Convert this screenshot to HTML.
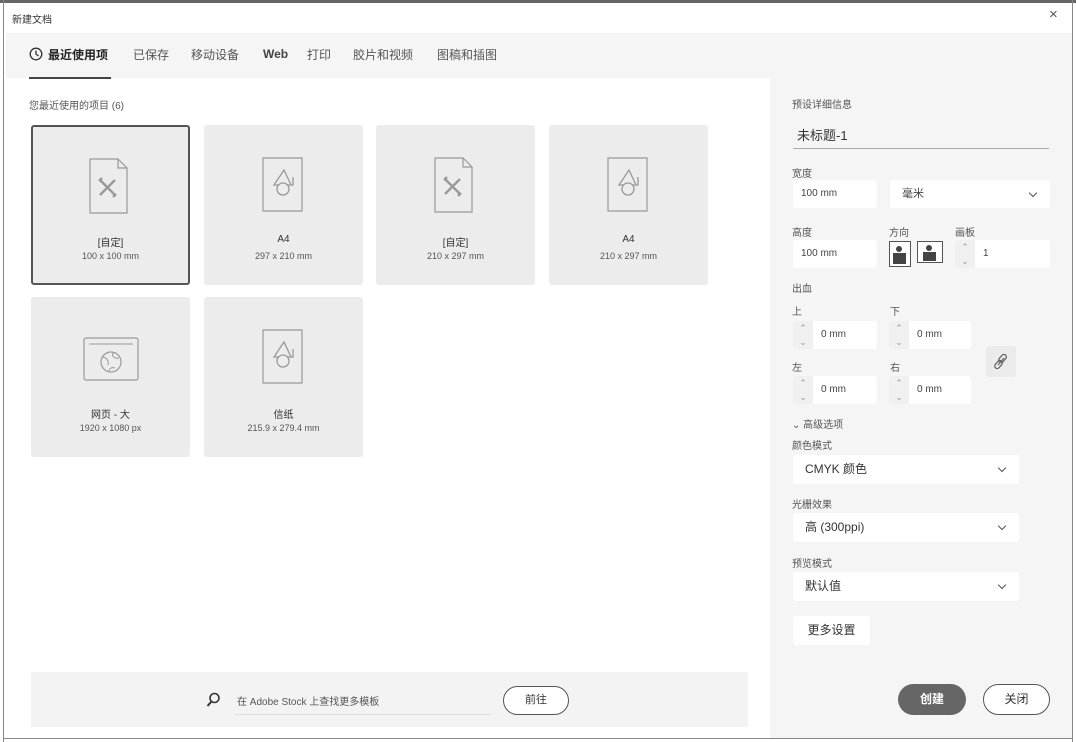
<!DOCTYPE html>
<html><head><meta charset="utf-8"><style>
*{margin:0;padding:0;box-sizing:border-box}
body{width:1076px;height:742px;background:#fff;font-family:"Liberation Sans","Noto Sans CJK SC",sans-serif;color:#333;position:relative;overflow:hidden}
.a{position:absolute}
.t{font-size:11px;color:#555}
.card{position:absolute;width:159px;height:160px;background:#ececec;border-radius:3px;text-align:center}
.card .n{position:absolute;top:109px;width:100%;font-size:10px;color:#333}
.card .s{position:absolute;top:126px;width:100%;font-size:9px;color:#555}
.card svg{position:absolute;left:56px;top:32px}
.inp{position:absolute;background:#fff;border-radius:3px;height:28px;font-size:10px;color:#444;line-height:28px;padding-left:8px}
.dd{position:absolute;background:#fff;border-radius:3px;height:29px;font-size:12px;color:#333;line-height:29px;padding-left:12px;left:793px;width:226px}
.dd:after,.chev:after{content:"";position:absolute;right:14px;top:10px;width:5px;height:5px;border-right:1.5px solid #555;border-bottom:1.5px solid #555;transform:rotate(45deg)}
.step{position:absolute;left:0;top:0;width:20px;height:28px;background:#f0f0f0;border-radius:3px 0 0 3px;font-size:9px;color:#999;text-align:center;line-height:14px}
.lbl{position:absolute;font-size:10px;color:#555}
</style></head><body>
<div class="a" style="left:0;top:0;width:1076px;height:3px;background:#666"></div>
<div class="a" style="left:3px;top:0;width:1px;height:742px;background:#888"></div>
<div class="a" style="left:1072px;top:0;width:1px;height:742px;background:#888"></div>
<div class="a" style="left:3px;top:738px;width:1070px;height:1px;background:#888"></div>
<div class="a" style="left:12px;top:11px;font-size:10px;color:#333">新建文档</div>
<div class="a" style="left:1049px;top:6px;font-size:15px;color:#555">×</div>
<div class="a" style="left:6px;top:33px;width:1066px;height:45px;background:#f5f5f5"></div>
<svg class="a" style="left:29px;top:47px" width="14" height="14" viewBox="0 0 14 14"><circle cx="7" cy="7" r="5.8" fill="none" stroke="#333" stroke-width="1.3"/><path d="M7 3.5V7l2.5 2" fill="none" stroke="#333" stroke-width="1.3"/></svg>
<div class="a" style="top:46px;left:48px;font-size:12px;color:#222;font-weight:bold">最近使用项</div>
<div class="a" style="top:46px;left:133px;font-size:12px;color:#555">已保存</div>
<div class="a" style="top:46px;left:191px;font-size:12px;color:#555">移动设备</div>
<div class="a" style="top:47px;left:263px;font-size:12px;color:#444;font-weight:bold">Web</div>
<div class="a" style="top:46px;left:307px;font-size:12px;color:#555">打印</div>
<div class="a" style="top:46px;left:353px;font-size:12px;color:#555">胶片和视频</div>
<div class="a" style="top:46px;left:437px;font-size:12px;color:#555">图稿和插图</div>
<div class="a" style="left:29px;top:77px;width:82px;height:2px;background:#444"></div>
<div class="a t" style="left:29px;top:97px;font-size:10px">您最近使用的项目 (6)</div>

<svg width="0" height="0" style="position:absolute"><defs>
<g id="pen"><path d="M1 1h28l9 9v45H1z" fill="none" stroke="#999" stroke-width="1.2"/><path d="M29 1v9h9" fill="none" stroke="#999" stroke-width="1.2"/><path d="M11 22l15 15M26 22L11 37M13 20l-3 3M24 39l3-3" stroke="#999" stroke-width="2.4" fill="none"/></g>
<g id="shp"><path d="M1 1h39v53H1z" fill="none" stroke="#999" stroke-width="1.2"/><path d="M22 13L12 28h17z M19 28h12v-8" fill="none" stroke="#999" stroke-width="1.3"/><circle cx="21" cy="32" r="6" fill="#ececec" stroke="#999" stroke-width="1.3"/></g>
</defs></svg>

<div class="card" style="left:31px;top:125px;border:2px solid #555"><svg style="left:56px;top:31px" width="40" height="56"><use href="#pen"/></svg><div class="n" style="top:107px">[自定]</div><div class="s" style="top:124px">100 x 100 mm</div></div>
<div class="card" style="left:204px;top:125px"><svg style="left:58px;top:32px" width="42" height="56"><use href="#shp"/></svg><div class="n">A4</div><div class="s">297 x 210 mm</div></div>
<div class="card" style="left:376px;top:125px"><svg style="left:58px;top:32px" width="40" height="56"><use href="#pen"/></svg><div class="n">[自定]</div><div class="s">210 x 297 mm</div></div>
<div class="card" style="left:549px;top:125px"><svg style="left:58px;top:32px" width="42" height="56"><use href="#shp"/></svg><div class="n">A4</div><div class="s">210 x 297 mm</div></div>
<div class="card" style="left:31px;top:297px"><svg style="left:52px;top:40px" width="56" height="44" viewBox="0 0 56 44"><rect x="1" y="1" width="54" height="42" rx="2" fill="none" stroke="#999" stroke-width="1.2"/><path d="M6 7h44" stroke="#999"/><circle cx="28" cy="25" r="10" fill="none" stroke="#999" stroke-width="1.2"/><path d="M20 20c4 1 6 4 5 8M30 16c-2 3 2 6 6 5M26 35c0-4 3-5 6-4" fill="none" stroke="#999"/></svg><div class="n">网页 - 大</div><div class="s">1920 x 1080 px</div></div>
<div class="card" style="left:204px;top:297px"><svg style="left:58px;top:32px" width="42" height="56"><use href="#shp"/></svg><div class="n">信纸</div><div class="s">215.9 x 279.4 mm</div></div>

<div class="a" style="left:31px;top:672px;width:717px;height:55px;background:#f3f3f3"></div>
<svg class="a" style="left:206px;top:692px" width="14" height="16"><circle cx="8.5" cy="6" r="4.5" fill="none" stroke="#333" stroke-width="1.6"/><path d="M5.5 9.5L1.5 14" stroke="#333" stroke-width="2"/></svg>
<div class="a" style="left:237px;top:693px;font-size:10px;color:#555">在 Adobe Stock 上查找更多模板</div>
<div class="a" style="left:235px;top:714px;width:256px;height:1px;background:#ddd"></div>
<div class="a" style="left:503px;top:686px;width:66px;height:29px;border:1.5px solid #555;border-radius:15px;background:#fff;text-align:center;line-height:26px;font-size:11px">前往</div>

<div class="a" style="left:770px;top:78px;width:302px;height:660px;background:#f5f5f5"></div>
<div class="lbl" style="left:792px;top:96px">预设详细信息</div>
<div class="a" style="left:797px;top:125px;font-size:13px;color:#333">未标题-1</div>
<div class="a" style="left:793px;top:148px;width:256px;height:1px;background:#aaa"></div>
<div class="lbl" style="left:792px;top:165px">宽度</div>
<div class="inp" style="left:793px;top:180px;width:84px">100 mm</div>
<div class="inp chev" style="left:890px;top:180px;width:160px;padding-left:12px;font-size:11px">毫米</div>
<div class="lbl" style="left:792px;top:224px">高度</div>
<div class="lbl" style="left:889px;top:224px">方向</div>
<div class="lbl" style="left:955px;top:224px">画板</div>
<div class="inp" style="left:793px;top:240px;width:84px">100 mm</div>
<div class="a" style="left:889px;top:241px;width:22px;height:26px;border:1.5px solid #555;background:#fff"><div class="a" style="left:6px;top:4px;width:6px;height:6px;background:#444;border-radius:50%"></div><div class="a" style="left:3px;top:11px;width:13px;height:11px;background:#444"></div></div>
<div class="a" style="left:917px;top:241px;width:26px;height:22px;border:1.5px solid #555;background:#fff"><div class="a" style="left:8px;top:3px;width:6px;height:6px;background:#444;border-radius:50%"></div><div class="a" style="left:5px;top:10px;width:13px;height:9px;background:#444"></div></div>
<div class="inp" style="left:955px;top:240px;width:95px;padding-left:28px"><div class="step">⌃<br>⌄</div>1</div>
<div class="lbl" style="left:792px;top:280px">出血</div>
<div class="lbl" style="left:792px;top:303px">上</div>
<div class="lbl" style="left:890px;top:303px">下</div>
<div class="inp" style="left:793px;top:321px;width:84px;padding-left:28px"><div class="step">⌃<br>⌄</div>0 mm</div>
<div class="inp" style="left:889px;top:321px;width:82px;padding-left:28px"><div class="step">⌃<br>⌄</div>0 mm</div>
<div class="lbl" style="left:792px;top:359px">左</div>
<div class="lbl" style="left:890px;top:359px">右</div>
<div class="inp" style="left:793px;top:376px;width:84px;padding-left:28px"><div class="step">⌃<br>⌄</div>0 mm</div>
<div class="inp" style="left:889px;top:376px;width:82px;padding-left:28px"><div class="step">⌃<br>⌄</div>0 mm</div>
<div class="a" style="left:986px;top:346px;width:30px;height:31px;background:#ebebeb;border-radius:3px"><svg width="30" height="31"><path d="M12 19l6-7" stroke="#666" stroke-width="1.3"/><rect x="14" y="8" width="5" height="9" rx="2.5" transform="rotate(40 16.5 12.5)" fill="none" stroke="#666" stroke-width="1.3"/><rect x="10" y="14" width="5" height="9" rx="2.5" transform="rotate(40 12.5 18.5)" fill="none" stroke="#666" stroke-width="1.3"/></svg></div>
<div class="lbl" style="left:792px;top:416px">⌄ 高级选项</div>
<div class="lbl" style="left:792px;top:437px">颜色模式</div>
<div class="dd" style="top:455px">CMYK 颜色</div>
<div class="lbl" style="left:792px;top:496px">光栅效果</div>
<div class="dd" style="top:513px">高 (300ppi)</div>
<div class="lbl" style="left:792px;top:555px">预览模式</div>
<div class="dd" style="top:572px">默认值</div>
<div class="a" style="left:793px;top:616px;width:77px;height:29px;background:#fff;border-radius:3px;font-size:12px;line-height:29px;text-align:center">更多设置</div>
<div class="a" style="left:898px;top:684px;width:68px;height:31px;background:#666;border-radius:16px;color:#fff;font-size:12px;font-weight:bold;text-align:center;line-height:31px">创建</div>
<div class="a" style="left:983px;top:684px;width:67px;height:31px;border:1.5px solid #555;background:#fff;border-radius:16px;font-size:12px;text-align:center;line-height:28px">关闭</div>
</body></html>
